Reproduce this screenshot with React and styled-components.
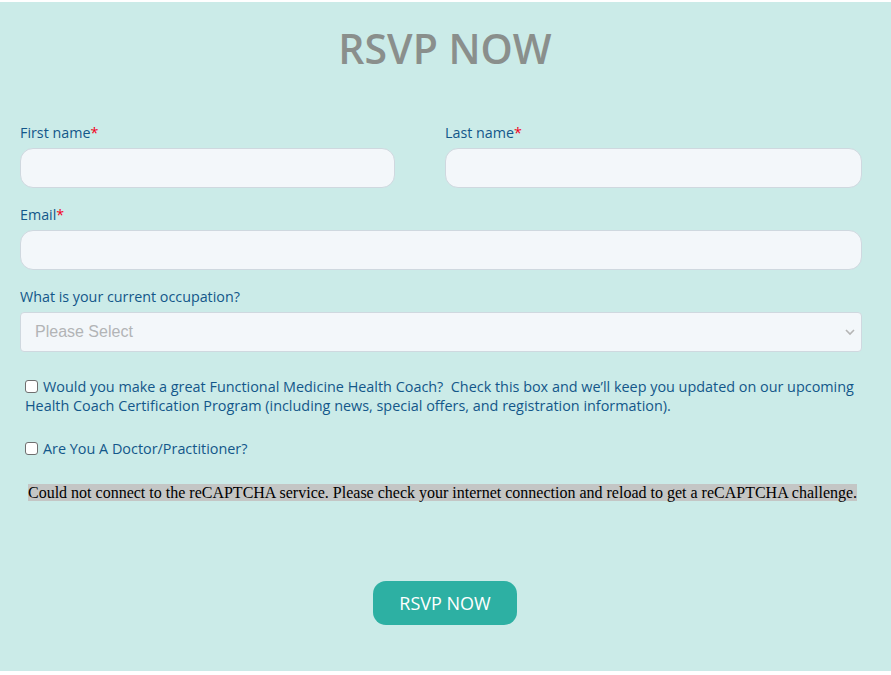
import React from 'react';
import styled, { createGlobalStyle } from 'styled-components';

const GlobalStyle = createGlobalStyle`
  html, body {
    margin: 0;
    padding: 0;
    background: #ffffff;
  }
  body {
    padding-top: 2px;
  }
`;

const Page = styled.div`
  background: #cbebe8;
  height: 669px;
  width: 891px;
  box-sizing: border-box;
  padding: 22px 29px 0 20px;
  font-family: 'Open Sans', sans-serif;
`;

const Title = styled.h1`
  margin: 0 0 51px;
  padding-left: 8px;
  text-align: center;
  font-family: 'Open Sans', sans-serif;
  font-weight: 600;
  font-size: 41px;
  line-height: 48px;
  color: #8a8f8c;
`;

const Row = styled.div`
  display: grid;
  grid-template-columns: ${(p) => p.$cols || '1fr'};
  column-gap: 50px;
  margin-bottom: ${(p) => p.$mb ?? 17}px;
`;

const Field = styled.div`
  display: flex;
  flex-direction: column;
`;

const Label = styled.label`
  font-size: 14.3px;
  line-height: 20px;
  color: #13578a;
  margin-bottom: 5px;
`;

const Required = styled.span`
  color: #f2001b;
`;

const Input = styled.input`
  box-sizing: border-box;
  height: 40px;
  width: 100%;
  border: 1px solid #cfd8df;
  border-radius: 13px;
  background: #f3f7fa;
  outline: none;
`;

const SelectBox = styled.div`
  position: relative;
  box-sizing: border-box;
  height: 40px;
  border: 1px solid #cfd8df;
  border-radius: 4px;
  background: #f3f7fa;
  display: flex;
  align-items: center;
  padding: 0 14px;
  font-family: 'Liberation Sans', Arial, sans-serif;
  font-size: 16px;
  color: #b2b4b6;
`;

const Chevron = styled.svg`
  position: absolute;
  right: 6px;
  top: 15px;
`;

const CheckRow = styled.div`
  padding-left: 5px;
  font-size: 14.4px;
  line-height: 19px;
  color: #13578a;
  margin-bottom: ${(p) => p.$mb || 0}px;
`;

const Box = styled.span`
  display: inline-block;
  box-sizing: border-box;
  width: 13px;
  height: 13px;
  border: 1px solid #6f6f6f;
  border-radius: 3px;
  background: #ffffff;
  vertical-align: -1px;
  margin-right: 5px;
`;

const Captcha = styled.p`
  margin: 0 0 0 8px;
  font-family: 'Liberation Serif', 'Times New Roman', serif;
  font-size: 16px;
  line-height: 18px;
  color: #000000;
`;

const CaptchaText = styled.span`
  background: #c4c6c5;
`;

const ButtonWrap = styled.div`
  display: flex;
  justify-content: center;
  padding-left: 8px;
  margin-top: 79px;
`;

const Button = styled.button`
  width: 144px;
  height: 44px;
  border: none;
  border-radius: 13px;
  background: #2db0a3;
  color: #ffffff;
  font-family: 'Open Sans', sans-serif;
  font-weight: 500;
  font-size: 18px;
  cursor: pointer;
`;

export default function App() {
  return (
    <>
      <GlobalStyle />
      <Page>
        <Title>RSVP NOW</Title>
        <Row $cols="375px 1fr">
          <Field>
            <Label>
              First name<Required>*</Required>
            </Label>
            <Input />
          </Field>
          <Field>
            <Label>
              Last name<Required>*</Required>
            </Label>
            <Input />
          </Field>
        </Row>
        <Row>
          <Field>
            <Label>
              Email<Required>*</Required>
            </Label>
            <Input />
          </Field>
        </Row>
        <Row $mb={25}>
          <Field>
            <Label>What is your current occupation?</Label>
            <SelectBox>
              Please Select
              <Chevron width="10" height="8" viewBox="0 0 10 8">
                <path d="M1 2l4 4 4-4" fill="none" stroke="#b5b5b5" strokeWidth="1.6" />
              </Chevron>
            </SelectBox>
          </Field>
        </Row>
        <CheckRow $mb={24}>
          <Box />
          Would you make a great Functional Medicine Health Coach?&nbsp; Check this box and we’ll keep you updated on our upcoming Health Coach Certification Program (including news, special offers, and registration information).
        </CheckRow>
        <CheckRow $mb={26}>
          <Box />
          Are You A Doctor/Practitioner?
        </CheckRow>
        <Captcha>
          <CaptchaText>
            Could not connect to the reCAPTCHA service. Please check your internet connection and reload to get a reCAPTCHA challenge.
          </CaptchaText>
        </Captcha>
        <ButtonWrap>
          <Button>RSVP NOW</Button>
        </ButtonWrap>
      </Page>
    </>
  );
}
